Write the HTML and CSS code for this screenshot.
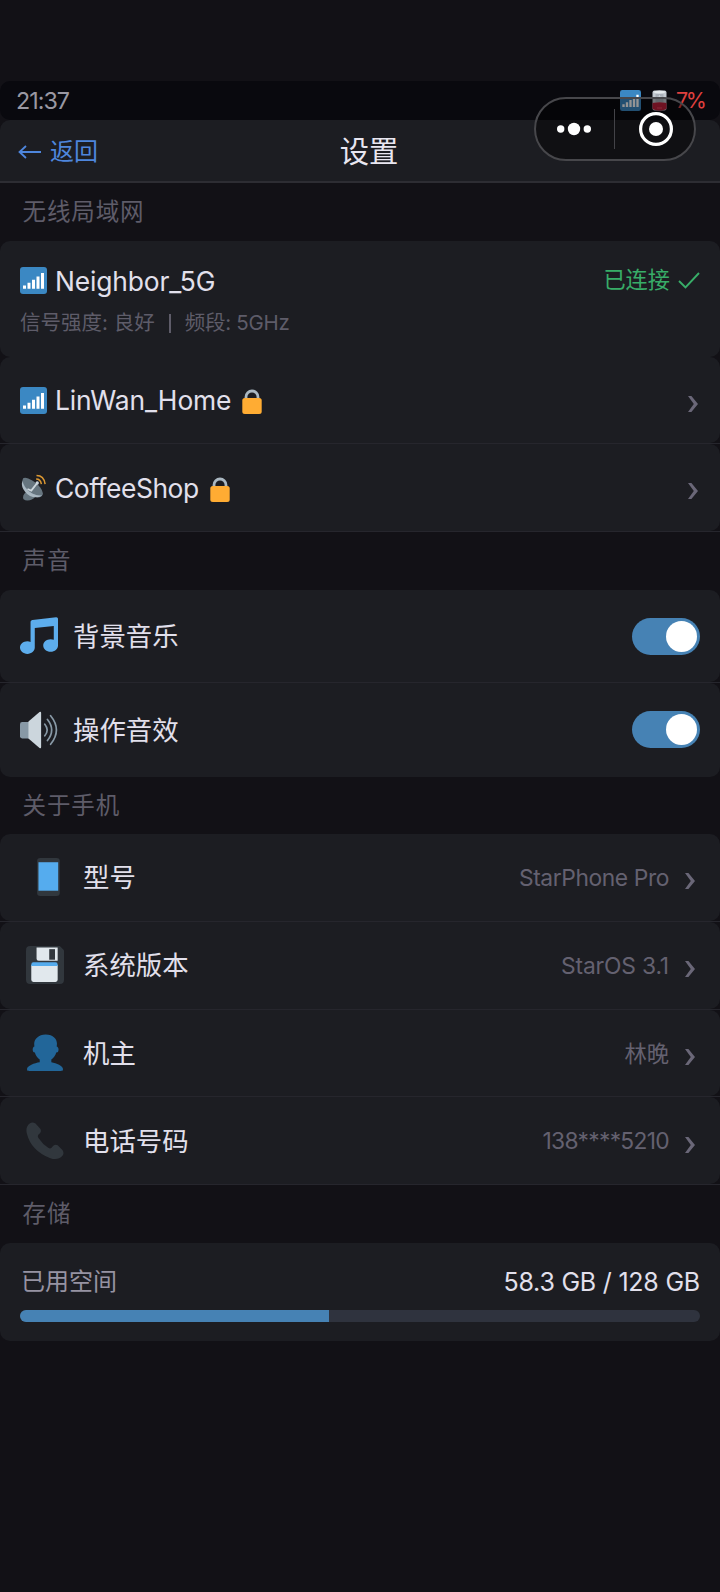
FILE: index.html
```html
<!DOCTYPE html>
<html lang="zh-CN">
<head>
<meta charset="utf-8">
<title>设置</title>
<link rel="stylesheet" href="styles.css">
</head>
<body>
<svg class="defs" width="0" height="0" aria-hidden="true">
  <symbol id="signal" viewBox="0 0 36 36"><rect width="36" height="36" rx="4" fill="#3b88c3"/><path fill="#fff" d="M4 24.500h4V29H4zM10 21h4v8h-4zM16 17h4v12h-4zM22 12.500h4V29h-4zM28 8h4v21h-4z"/></symbol>
  <symbol id="lock" viewBox="0 0 20 25"><path d="M4 12V8a6 6 0 0 1 12 0v4" fill="none" stroke="#aab8c2" stroke-width="2.800"/><rect x=".3" y="9" width="19.400" height="16" rx="2.500" fill="#ffac33"/></symbol>
  <symbol id="chevron" viewBox="0 0 10 16"><path d="M0 0h3.400L10 8l-6.600 8H0l5.800-8z" fill="#6a6778"/></symbol>
</svg>
<div class="capsule">
  <svg width="34" height="14" viewBox="0 0 34 14" fill="#fff"><circle cx="3.700" cy="7" r="3.700"/><circle cx="17" cy="7" r="6.200"/><circle cx="30.300" cy="7" r="3.700"/></svg>
  <span class="divider"></span>
  <svg width="34" height="34" viewBox="0 0 34 34"><circle cx="17" cy="17" r="15.400" fill="none" stroke="#fff" stroke-width="3.200"/><circle cx="17" cy="17" r="7" fill="#fff"/></svg>
</div>
<main>
  <div class="status"><span class="time">21:37</span>
    <svg class="st-signal" width="21" height="21"><use href="#signal"/></svg>
    <svg class="st-battery" width="15" height="21" viewBox="0 0 15 21"><rect x=".5" y=".5" width="14" height="20" rx="2" fill="#c3cad1"/><ellipse cx="7.500" cy="2" rx="6" ry="1.500" fill="#e4e9ec"/><path d="M3.500 4h8v8h-8z" fill="#a9b0b9"/><path d="M7.500 5v4M5.500 7h4" stroke="#c9d0d6"/><path d="M.5 13q7-1.500 14 0v6q-7 3-14 0z" fill="#be1f3c"/><path d="M5 18h5" stroke="#ee4460"/></svg>
    <span class="level">7%</span>
  </div>
  <header><span class="back"><svg width="24" height="16" viewBox="0 0 24 16" fill="none" stroke="#4e86dd" stroke-width="1.800"><path d="M23 8H1.500M8 2L1.500 8 8 14"/></svg>返回</span><h1>设置</h1></header>

  <h2>无线局域网</h2>
  <section class="wifi">
    <div class="row current">
      <div class="line"><svg class="i27"><use href="#signal"/></svg><span class="label n1">Neighbor_5G</span><span class="ok">已连接<svg width="22" height="17" viewBox="0 0 22 17" fill="none" stroke="#38ad68" stroke-width="1.900"><path d="M1 9l6.500 6.500L21 1"/></svg></span></div>
      <p class="detail"><span>信号强度: 良好</span><i></i><span class="band">频段: 5GHz</span></p>
    </div>
    <div class="item"><div class="row"><svg class="i27"><use href="#signal"/></svg><span class="label n2">LinWan_Home</span><svg class="lock"><use href="#lock"/></svg><svg class="chev"><use href="#chevron"/></svg></div></div>
    <div class="item"><div class="row"><svg class="i27" viewBox="0 0 36 36"><path d="M4 32q0-7 7-9l9 8q-4 5-13 4-3-1-3-3z" fill="#66757f"/><path d="M4 6Q1 16 9 24q8 8 17 7 5-2 4-6Z" fill="#8899a6"/><path d="M4 6q2-2 7 0 10 4 16 12 5 7 2 10-9 2-18-6Q2 13 4 6z" fill="#66757f"/><path d="M3 9q2 9 10 15 7 5 15 5l-4 2q-11 1-17-7Q1 17 3 9z" fill="#aab8c2"/><path d="M10 20l5 2 8-10" fill="none" stroke="#ccd6dd" stroke-width="2.500"/><circle cx="23" cy="12" r="2.200" fill="#ccd6dd"/><path d="M21.500 6.500q6 0 7 7M22 2q10 0 11.500 11.500" fill="none" stroke="#dc9832" stroke-width="2"/></svg><span class="label n3">CoffeeShop</span><svg class="lock"><use href="#lock"/></svg><svg class="chev"><use href="#chevron"/></svg></div></div>
  </section>

  <h2>声音</h2>
  <section class="sound">
    <div class="item"><div class="row"><svg class="i38" viewBox="0 0 36 36"><path fill="#5dadec" d="M34.209.206L11.791 2.793C10.806 2.907 10 3.811 10 4.803v18.782C9.090 23.214 8.075 23 7 23c-3.865 0-7 2.685-7 6 0 3.314 3.135 6 7 6s7-2.686 7-6V10.539l18-2.077v13.124c-.91-.372-1.925-.586-3-.586-3.865 0-7 2.685-7 6 0 3.314 3.135 6 7 6s7-2.686 7-6V1.803c0-.992-.806-1.710-1.791-1.597z"/></svg><span class="label">背景音乐</span><span class="switch"></span></div></div>
    <div class="row"><svg class="i38" viewBox="0 0 36 36"><rect y="10.500" width="11" height="15.500" rx="2" fill="#8899a6"/><path d="M18.500 1Q20 0 20 2v32q0 2-1.500 1L8 26V10z" fill="#ccd6dd"/><path d="M23.500 12.500q4.500 5.500 0 11M26 8q8 10 0 20M29 4.500q11 13.500 0 27" fill="none" stroke="#8899a6" stroke-width="1.600" stroke-linecap="round"/></svg><span class="label">操作音效</span><span class="switch"></span></div>
  </section>

  <h2>关于手机</h2>
  <section class="about">
    <div class="item"><div class="row"><svg class="i38" viewBox="0 0 36 36"><rect x="10.500" width="21.500" height="36" rx="3" fill="#31373d"/><path fill="#55acee" d="M11.800 4h18.700v27H11.800z"/></svg><span class="label">型号</span><span class="value v1">StarPhone Pro</span><svg class="chev"><use href="#chevron"/></svg></div></div>
    <div class="item"><div class="row"><svg class="i38" viewBox="0 0 36 36"><path fill="#31373d" d="M4 0h28l4 4v28q0 4-4 4H4q-4 0-4-4V4q0-4 4-4z"/><path fill="#e1e8ed" d="M10 1.500h20V14H12q-2 0-2-2zM5 18h25v14q0 2-2 2H7q-2 0-2-2z"/><path fill="#31373d" d="M22 3h5.500v10H22z"/><path fill="#55acee" d="M5 17.500q0-2 2-2h21q2 0 2 2V19H5z"/></svg><span class="label">系统版本</span><span class="value v2">StarOS 3.1</span><svg class="chev"><use href="#chevron"/></svg></div></div>
    <div class="item"><div class="row"><svg class="i38" viewBox="0 0 36 36"><path fill="#226699" d="M24 26.799v-2.566c2-1.348 4.080-3.779 4.703-6.896.186.103.206.17.413.17.991 0 1.709-1.287 1.709-2.873 0-1.562-.823-2.827-1.794-2.865.187-.674.293-1.577.293-2.735C29.324 5.168 26 .527 18.541.527c-6.629 0-10.777 4.641-10.777 8.507 0 1.123.069 2.043.188 2.755-.911.137-1.629 1.352-1.629 2.845 0 1.587.804 2.873 1.796 2.873.206 0 .025-.067.209-.17C8.952 20.453 11 22.885 13 24.232v2.414c-5 .645-12 3.437-12 6.230v1.061C1 35 2.076 35 3.137 35h29.725C33.924 35 35 35 35 33.938v-1.061c0-2.615-6-5.225-11-6.078z"/></svg><span class="label">机主</span><span class="value v3">林晚</span><svg class="chev"><use href="#chevron"/></svg></div></div>
    <div class="item"><div class="row"><svg class="i38" viewBox="0 0 36 36"><path fill="#31373d" d="M3.500 1.500Q6-.5 9 1.500l4.500 5q1.500 2.500-.5 4.500-3 2-1 4.500 4 6 9 9 2.500 1.500 4-1 2-3 5-1.500l4.500 4.500q2 3 0 5.500Q30 37 22.500 34 5 27 1 11.500-1 5 3.500 1.500z"/></svg><span class="label">电话号码</span><span class="value v4">138****5210</span><svg class="chev"><use href="#chevron"/></svg></div></div>
  </section>

  <h2>存储</h2>
  <section class="storage">
    <div class="usage"><span class="used">已用空间</span><span class="total">58.3 GB / 128 GB</span></div>
    <div class="track"><div class="fill" style="width:45.5%"></div></div>
  </section>
</main>
</body>
</html>
```
FILE: styles.css
```css
* { box-sizing: border-box; }
body {
  margin: 0;
  min-height: 1592px;
  background: #121116;
  color: #e2e0ec;
  font-family: Inter, "Noto Sans CJK SC", sans-serif;
  font-size: 26.400px;
  line-height: 1;
  white-space: nowrap;
}
main { padding-top: 81px; }
svg { flex: none; display: block; }
.defs { position: absolute; }

.status {
  height: 39px;
  padding: 0 17px 0 16px;
  display: flex;
  align-items: center;
  border-radius: 10px;
  background: #09090e;
}
.time { margin-right: auto; padding-top: 1px; color: #9a98a2; font-size: 23.300px; letter-spacing: -1px; }
.st-battery { margin: 0 9px 0 11px; }
.level { color: #e0403e; font-size: 21.500px; letter-spacing: -2.500px; width: 27px; }

header {
  height: 63px;
  display: grid;
  grid-template-columns: 1fr auto 1fr;
  align-items: center;
  padding: 2px 18px 0;
  background: #1c1d22;
  border-bottom: 2px solid #2d2d33;
  border-radius: 10px 10px 0 0;
}
.back { display: flex; align-items: center; gap: 8px; color: #4e86dd; font-size: 24px; }
h1 { margin: 0 0 0 18px; font-size: 29.300px; font-weight: 400; color: #e8e6f0; }

.capsule {
  position: absolute;
  left: 534px;
  top: 97px;
  width: 162px;
  height: 64px;
  border: 2px solid #47474b;
  border-radius: 32px;
  background: rgba(0, 0, 0, .42);
  display: flex;
  align-items: center;
  padding: 0 21px;
}
.divider { width: 2px; height: 40px; background: #434348; margin: 0 24px 0 23px; }

h2 {
  height: 58px;
  margin: 0;
  padding-left: 22.500px;
  font-size: 23.500px;
  letter-spacing: .9px;
  font-weight: 400;
  line-height: 58px;
  color: #5e5c69;
}
.row {
  height: 100%;
  display: flex;
  align-items: center;
  padding: 0 20px;
  border-radius: 10px;
  background: #1c1d22;
}
.item { border-bottom: 1px solid #26262d; }
.wifi .item { height: 88px; }
.wifi .current + .item { height: 87px; }
.wifi .current { height: 116px; display: block; padding-top: 26px; }
.label { position: relative; }
.line { display: flex; align-items: center; height: 27px; }
.i27 { width: 27px; height: 27px; margin-right: 8px; }
.i38 { width: 38px; height: 38px; margin-right: 15px; }
.n1 { letter-spacing: -.15px; padding-top: 1px; }
.n2 { letter-spacing: -.1px; padding-top: 1px; }
.n3 { letter-spacing: -.45px; padding-top: 2px; }
.lock { width: 20px; height: 25px; margin: 3px 0 0 11px; }
.chev { width: 10px; height: 16px; margin: 7px 2px 0 auto; }
.ok { margin-left: auto; display: flex; align-items: center; gap: 8px; font-size: 22.200px; color: #38ad68; }
.detail { margin: 18px 0 0; display: flex; align-items: center; height: 22px; font-size: 20.500px; color: #5e5c69; }
.detail i { width: 2px; height: 19px; margin: 0 14px; background: #5e5c69; }
.band { letter-spacing: -.25px; }

.sound .item { height: 93px; }
.sound > .row { height: 93.500px; }
.switch { width: 68px; height: 37px; margin-left: auto; padding: 3px; display: flex; justify-content: flex-end; border-radius: 19px; background: #4682b4; }
.switch::after { content: ""; width: 31px; height: 31px; border-radius: 50%; background: #fff; }
.sound + h2 { height: 57.500px; }

.about .item { height: 87.800px; }
.about .row { padding-left: 26px; }
.about .i38 { margin-right: 19px; }
.about .chev { margin: 8px 5px 0 16px; }
.value { margin-left: auto; padding-top: 2px; font-size: 22.800px; color: #646170; }
.v1 { letter-spacing: -.4px; }
.v2 { letter-spacing: -.15px; }
.v3 { font-size: 22.300px; }
.v4 { letter-spacing: -.7px; }

.storage { height: 98px; padding: 25px 20px 0; border-radius: 10px; background: #1c1d22; }
.usage { display: flex; justify-content: space-between; align-items: center; height: 27px; }
.used { margin-left: 1px; font-size: 24px; color: #9693a2; }
.total { padding-top: 1px; font-size: 25px; letter-spacing: -.22px; }
.track { margin-top: 15px; height: 12px; border-radius: 6px; overflow: hidden; background: #2f333e; }
.fill { height: 100%; background: #4682b4; }
```
